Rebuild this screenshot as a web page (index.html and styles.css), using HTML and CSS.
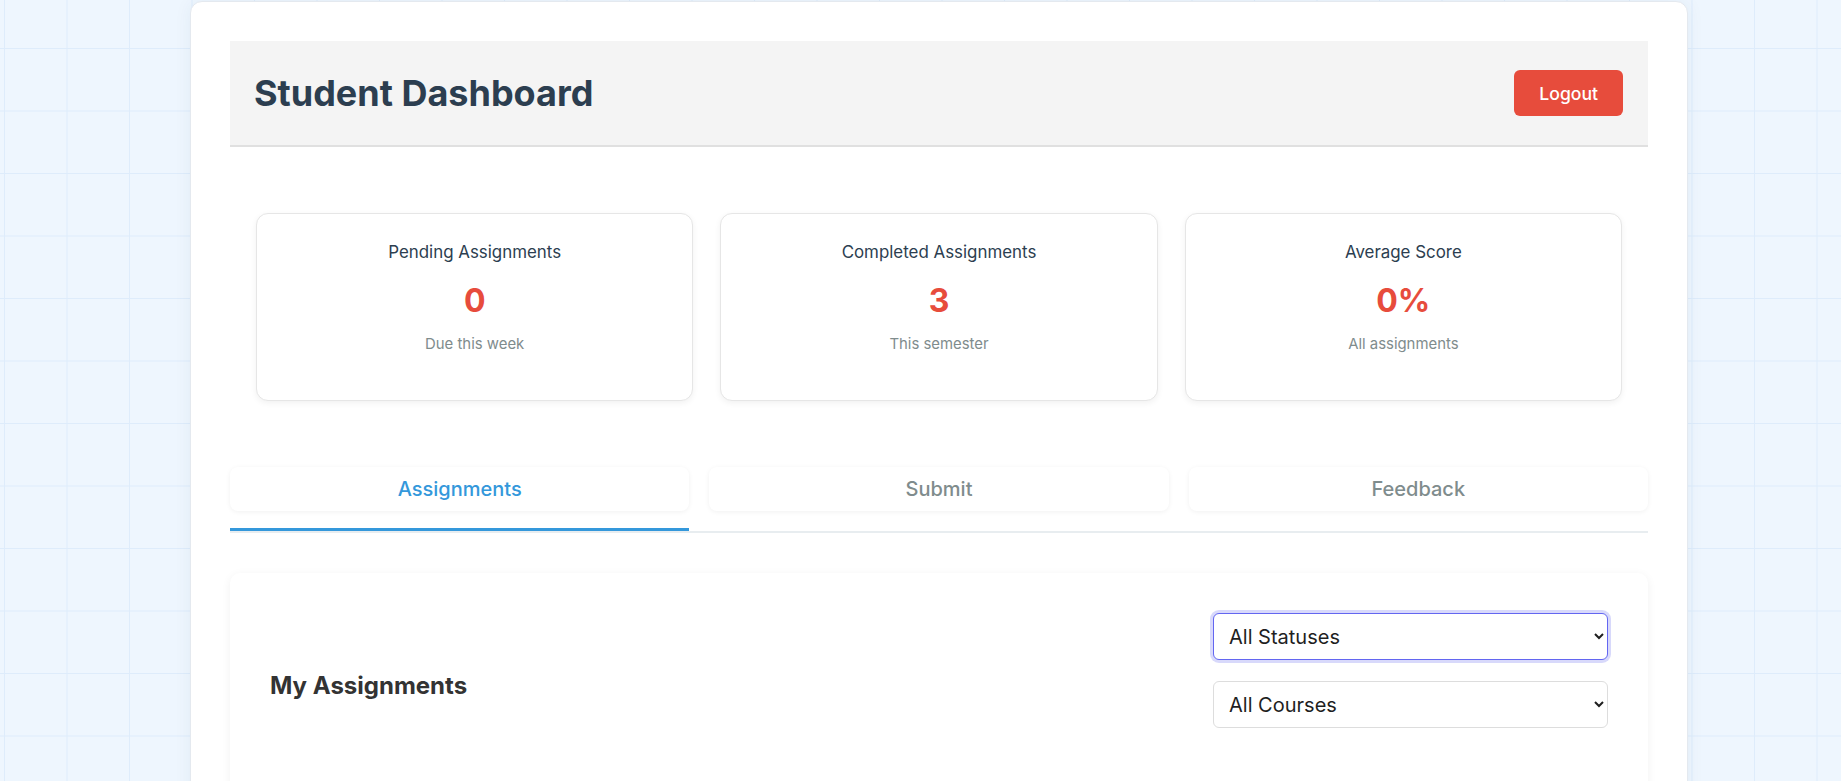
FILE: index.html
```html
<!DOCTYPE html>
<html lang="en">
<head>
<meta charset="utf-8">
<title>Student Dashboard</title>
<link rel="stylesheet" href="styles.css">
</head>
<body>
  <div class="app">
    <header class="topbar">
      <h1 class="topbar-title">Student Dashboard</h1>
      <button class="logout-btn" type="button">Logout</button>
    </header>

    <section class="stats">
      <div class="stat-card">
        <h3 class="stat-label">Pending Assignments</h3>
        <div class="stat-value">0</div>
        <p class="stat-note">Due this week</p>
      </div>
      <div class="stat-card">
        <h3 class="stat-label">Completed Assignments</h3>
        <div class="stat-value">3</div>
        <p class="stat-note">This semester</p>
      </div>
      <div class="stat-card">
        <h3 class="stat-label">Average Score</h3>
        <div class="stat-value">0%</div>
        <p class="stat-note">All assignments</p>
      </div>
    </section>

    <nav class="tabs">
      <div class="tab-row">
        <button class="tab tab-active" type="button">Assignments</button>
        <button class="tab" type="button">Submit</button>
        <button class="tab" type="button">Feedback</button>
      </div>
      <div class="tab-track"><span class="tab-indicator"></span></div>
    </nav>

    <section class="panel">
      <div class="panel-head">
        <h2 class="panel-title">My Assignments</h2>
        <div class="filters">
          <select class="filter-select is-focused">
            <option>All Statuses</option>
            <option>Pending</option>
            <option>Submitted</option>
            <option>Graded</option>
          </select>
          <select class="filter-select">
            <option>All Courses</option>
          </select>
        </div>
      </div>
    </section>
  </div>
</body>
</html>
```

FILE: styles.css
```css
* {
  box-sizing: border-box;
}

html,
body {
  height: 100%;
  overflow: hidden;
}

body {
  margin: 0;
  font-family: "Inter", "Liberation Sans", sans-serif;
  color: #2c3e50;
  background-color: #eef6fe;
  background-image:
    linear-gradient(to right, #deecfb 1px, transparent 1px),
    linear-gradient(to bottom, #deecfb 1px, transparent 1px);
  background-size: 62.5px 62.5px;
  background-position: 4px 48px;
}

.app {
  width: 1498px;
  min-height: 900px;
  margin: 1px 0 0 190px;
  padding: 39px;
  background: #ffffff;
  border: 1px solid #e4e9ef;
  border-radius: 12px;
  box-shadow: 0 0 18px rgba(30, 60, 100, 0.06);
}

/* Header */
.topbar {
  display: flex;
  align-items: center;
  justify-content: space-between;
  height: 106px;
  padding: 0 25px 0 24px;
  background: #f4f4f4;
  border-bottom: 2px solid #e0e0e0;
}

.topbar-title {
  margin: 0;
  font-size: 36px;
  font-weight: 700;
  color: #2c3e50;
}

.logout-btn {
  height: 46px;
  padding: 0 25px;
  border: none;
  border-radius: 6px;
  background: #e74c3c;
  color: #ffffff;
  font-family: inherit;
  font-size: 17.6px;
  font-weight: 500;
}

/* Stats */
.stats {
  display: grid;
  grid-template-columns: repeat(3, 1fr);
  gap: 27px;
  margin: 66px 26px 0;
}

.stat-card {
  height: 188px;
  padding: 28px 20px 0;
  text-align: center;
  background: #ffffff;
  border: 1px solid #e6e6e6;
  border-radius: 12px;
  box-shadow: 0 2px 6px rgba(0, 0, 0, 0.06);
}

.stat-label {
  margin: 0 0 19px;
  font-size: 16.9px;
  font-weight: 400;
  color: #2c3e50;
}

.stat-value {
  font-size: 32px;
  font-weight: 700;
  color: #e74c3c;
}

.stat-note {
  margin: 15px 0 0;
  font-size: 14.9px;
  color: #7f8c8d;
}

/* Tabs */
.tabs {
  margin-top: 66px;
}

.tab-row {
  display: grid;
  grid-template-columns: repeat(3, 1fr);
  gap: 20px;
}

.tab {
  height: 44px;
  padding: 0;
  border: none;
  border-radius: 8px;
  background: #ffffff;
  box-shadow: 0 1px 5px rgba(0, 0, 0, 0.06);
  font-family: inherit;
  font-size: 20px;
  font-weight: 500;
  color: #7f8c8d;
}

.tab-active {
  color: #3498db;
}

.tab-track {
  display: flex;
  margin-top: 17px;
  border-bottom: 2px solid #e8edf0;
}

.tab-indicator {
  width: calc((100% - 40px) / 3);
  height: 3px;
  background: #3498db;
}

/* Panel */
.panel {
  min-height: 400px;
  margin-top: 40px;
  padding: 40px;
  background: #ffffff;
  border-radius: 10px;
  box-shadow: 0 2px 10px rgba(0, 0, 0, 0.06);
}

.panel-head {
  display: flex;
  align-items: center;
  justify-content: space-between;
}

.panel-title {
  margin: 30px 0 0;
  font-size: 24px;
  font-weight: 700;
  color: #333333;
}

.filters {
  display: flex;
  flex-direction: column;
  gap: 21px;
  width: 395px;
}

.filter-select {
  height: 47px;
  padding: 0 8px 0 11px;
  border: 1px solid #dddddd;
  border-radius: 6px;
  background-color: #ffffff;
  font-family: inherit;
  font-size: 20px;
  color: #1f1f1f;
}

.filter-select.is-focused {
  border-color: #6366f1;
  box-shadow: 0 0 0 3px rgba(99, 102, 241, 0.25);
  outline: none;
}
```
